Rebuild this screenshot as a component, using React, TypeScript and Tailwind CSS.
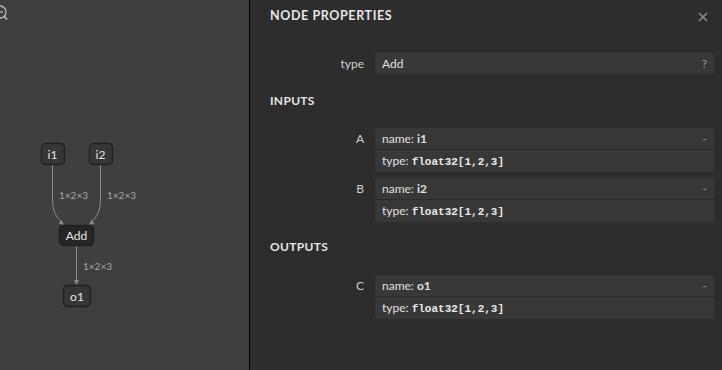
import React from "react";

const sans = "font-['Lato','Noto_Sans',sans-serif]";
const mono = "font-['Liberation_Mono','DejaVu_Sans_Mono',monospace]";

const Graph = () => {
  return (
    <div className="relative h-full w-[249px] shrink-0 bg-[#3f3f3f]">
      <svg width="249" height="370" className="absolute left-0 top-0">
        {/* zoom control, partly off canvas */}
        <circle cx="0" cy="12" r="6" fill="none" stroke="#bbbbbb" strokeWidth="1.3" />
        <line x1="-3" y1="12" x2="3" y2="12" stroke="#bbbbbb" strokeWidth="1.2" />
        <line x1="4" y1="16" x2="7" y2="19.5" stroke="#bbbbbb" strokeWidth="1.6" />

        {/* edges */}
        <g fill="none" stroke="#8a8a8a" strokeWidth="1">
          <path d="M52.5 164 L52.5 200 Q52.5 216 63 223" />
          <path d="M100.5 164 L100.5 200 Q100.5 216 90 223" />
          <path d="M76.5 245 L76.5 283" />
        </g>
        <g fill="#8a8a8a">
          <path d="M64 225 L58.5 223.5 L61.5 220 Z" />
          <path d="M89 225 L91.5 220 L94.5 223.5 Z" />
          <path d="M76.5 285 L74 280 L79 280 Z" />
        </g>

        {/* nodes */}
        <g stroke="#202020" strokeWidth="1.4">
          <rect x="41.5" y="143.5" width="23" height="21" rx="4" fill="#363636" />
          <rect x="89.5" y="143.5" width="23" height="21" rx="4" fill="#363636" />
          <rect x="59.5" y="225.5" width="34" height="20" rx="4" fill="#262626" />
          <rect x="63.5" y="285.5" width="27" height="21" rx="4" fill="#363636" />
        </g>
        <g fill="#e6e6e6" fontSize="12" fontFamily="Lato, 'Noto Sans', sans-serif" textAnchor="middle">
          <text x="52.5" y="159">i1</text>
          <text x="100.5" y="159">i2</text>
          <text x="76.5" y="240">Add</text>
          <text x="77" y="300.5">o1</text>
        </g>
        <g fill="#a8a8a8" fontSize="10" fontFamily="Lato, 'Noto Sans', sans-serif">
          <text x="59" y="199">1×2×3</text>
          <text x="107" y="199">1×2×3</text>
          <text x="83" y="270">1×2×3</text>
        </g>
      </svg>
    </div>
  );
};

const Label = ({ children }: { children: React.ReactNode }) => (
  <div className="w-[95px] shrink-0 pr-[1px] text-right text-[12px] leading-[21px] text-[#d0d0d0]">{children}</div>
);

const Arg = ({ letter, name }: { letter: string; name: string }) => (
  <div className="flex">
    <Label>{letter}</Label>
    <div className="ml-[10px] flex-1 overflow-hidden rounded-[3px] bg-[#383838] text-[12px] text-[#e0e0e0]">
      <div className="flex h-[21px] items-center justify-between px-[7px]">
        <span>
          name: <b className="font-bold">{name}</b>
        </span>
        <span className="text-[#9a9a9a]">-</span>
      </div>
      <div className="h-[1px] bg-[#2d2d2d]" />
      <div className="flex h-[22px] items-center px-[7px]">
        <span>
          type: <code className={`${mono} text-[11px] font-bold text-[#e8e8e8]`}>float32[1,2,3]</code>
        </span>
      </div>
    </div>
  </div>
);

const Section = ({ title, className }: { title: string; className: string }) => (
  <div className={`flex items-center text-[12px] font-bold tracking-[0.3px] text-[#e4e4e4] ${className}`}>{title}</div>
);

export default function App() {
  return (
    <div className={`flex h-[370px] w-[722px] overflow-hidden ${sans}`}>
      <Graph />
      <div className="h-full flex-1 border-l border-black bg-[#2d2d2d] pl-[20px] pr-[8px]">
        <div className="flex h-[33px] items-center justify-between">
          <div className="text-[12.5px] font-bold tracking-[0.6px] text-[#e6e6e6]">NODE PROPERTIES</div>
          <svg width="10" height="10" viewBox="0 0 10 10" className="mr-[6px]">
            <path d="M1 1 L9 9 M9 1 L1 9" stroke="#8c8c8c" strokeWidth="1.6" />
          </svg>
        </div>
        <div className="mt-[20px] flex">
          <Label>type</Label>
          <div className="ml-[10px] flex h-[21px] flex-1 items-center justify-between rounded-[3px] bg-[#383838] px-[7px] text-[12px] text-[#e0e0e0]">
            <span>Add</span>
            <span className="text-[#9a9a9a]">?</span>
          </div>
        </div>
        <Section title="INPUTS" className="h-[54px]" />
        <div className="flex flex-col gap-[6px]">
          <Arg letter="A" name="i1" />
          <Arg letter="B" name="i2" />
        </div>
        <Section title="OUTPUTS" className="h-[53px] pb-[3px]" />
        <Arg letter="C" name="o1" />
      </div>
    </div>
  );
}
